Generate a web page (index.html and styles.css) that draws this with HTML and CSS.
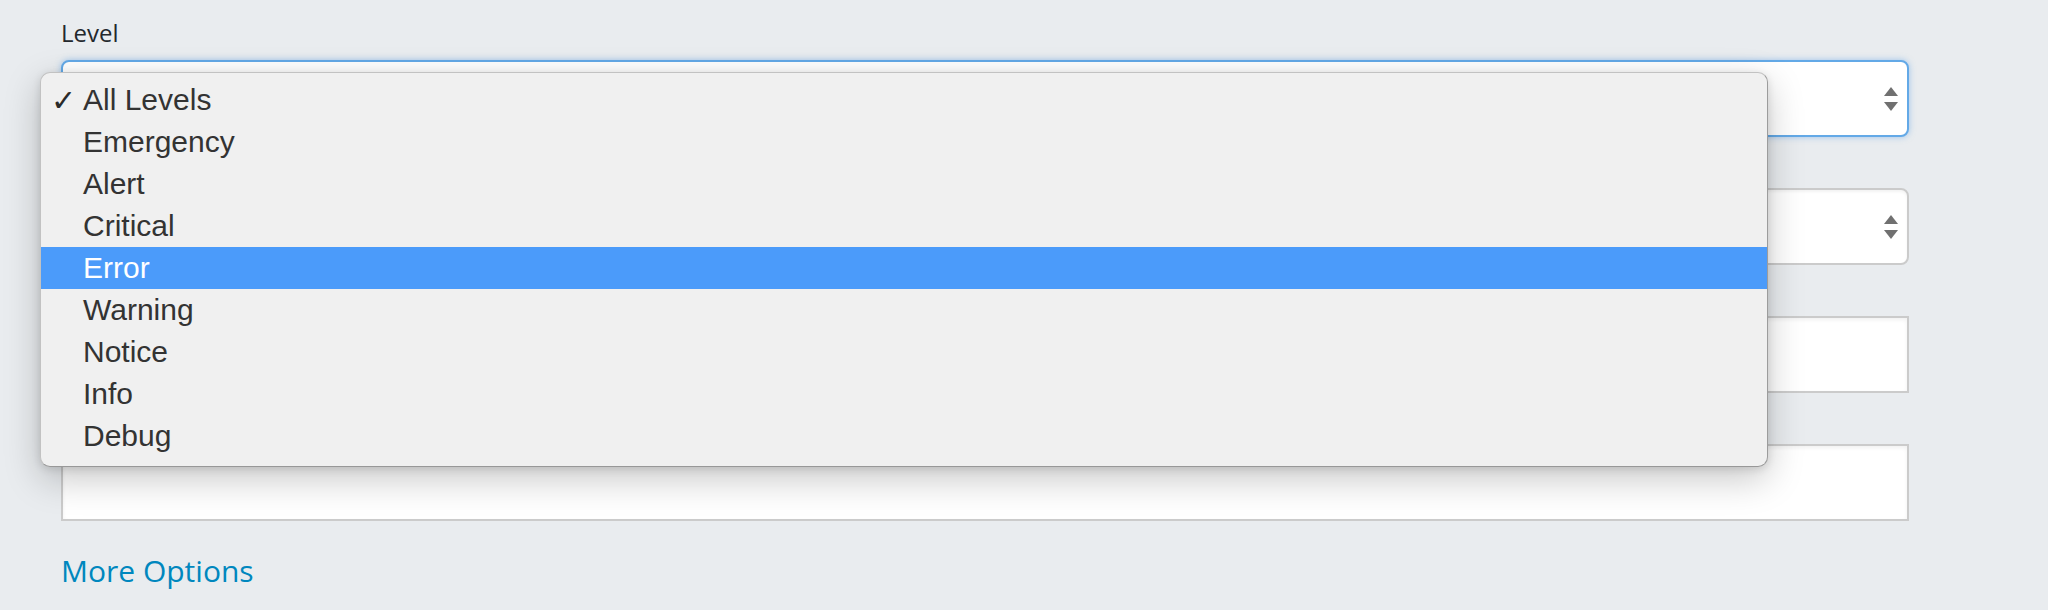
FILE: index.html
```html
<!DOCTYPE html>
<html>
    <head>
        <meta charset="utf-8">
        <title>Log filters</title>
        <link rel="stylesheet" href="styles.css">
    </head>
    <body>
        <div class="page">
            <form class="filters">
                <div class="field">
                    <label class="label">Level</label>
                    <div class="select focused">
                        <svg class="arrows" width="14" height="24" viewBox="0 0 14 24">
                            <polygon points="7,0 14,9 0,9" fill="#707070"/>
                            <polygon points="0,15 14,15 7,24" fill="#707070"/>
                        </svg>
                    </div>
                </div>
                <div class="field">
                    <label class="label covered">Channel</label>
                    <div class="select">
                        <svg class="arrows" width="14" height="24" viewBox="0 0 14 24">
                            <polygon points="7,0 14,9 0,9" fill="#707070"/>
                            <polygon points="0,15 14,15 7,24" fill="#707070"/>
                        </svg>
                    </div>
                </div>
                <div class="field">
                    <label class="label covered">Message</label>
                    <div class="input"></div>
                </div>
                <div class="field">
                    <label class="label covered">Context</label>
                    <div class="input"></div>
                </div>
                <a class="more" href="#">More Options</a>
            </form>

            <!-- native select popup, open over the form -->
            <ul class="menu">
                <li class="item"><span class="check">&#10003;</span>All Levels</li>
                <li class="item"><span class="check"></span>Emergency</li>
                <li class="item"><span class="check"></span>Alert</li>
                <li class="item"><span class="check"></span>Critical</li>
                <li class="item active"><span class="check"></span>Error</li>
                <li class="item"><span class="check"></span>Warning</li>
                <li class="item"><span class="check"></span>Notice</li>
                <li class="item"><span class="check"></span>Info</li>
                <li class="item"><span class="check"></span>Debug</li>
            </ul>
        </div>
    </body>
</html>
```

FILE: styles.css
```css
html, body {
    margin: 0;
    background: #e9ecef;
}
.page {
    position: relative;
    height: 610px;
    overflow: hidden;
}
.filters {
    display: flex;
    flex-direction: column;
    padding: 16px 139px 0 61px;
    font-family: "Open Sans", sans-serif;
}
.field {
    display: flex;
    flex-direction: column;
    margin-bottom: 7px;
}
.label {
    font-size: 24px;
    line-height: 34px;
    color: #23282d;
    margin-bottom: 10px;
}
/* hidden under the open menu anyway */
.label.covered {
    visibility: hidden;
}
.select {
    display: flex;
    align-items: center;
    justify-content: flex-end;
    box-sizing: border-box;
    height: 77px;
    padding-right: 9px;
    background: #fff;
    border: 2px solid #cbcbcb;
    border-radius: 8px;
    box-shadow: inset 0 2px 3px rgba(0, 0, 0, 0.05);
}
.select.focused {
    border-color: #63a9e7;
    box-shadow: 0 0 6px rgba(92, 160, 230, 0.55);
}
.input {
    box-sizing: border-box;
    height: 77px;
    background: #fff;
    border: 2px solid #cbcbcb;
    box-shadow: inset 0 2px 4px rgba(0, 0, 0, 0.06);
}
.more {
    margin-top: 22px;
    font-size: 30px;
    line-height: 42px;
    color: #0087be;
    text-decoration: none;
}

.menu {
    position: absolute;
    left: 40px;
    top: 72px;
    width: 1728px;
    box-sizing: border-box;
    margin: 0;
    padding: 6px 0 9px;
    list-style: none;
    background: #f0f0f0;
    border: 1px solid #c2c2c2;
    border-right-color: #9c9c9c;
    border-bottom-color: #989898;
    border-radius: 10px;
    box-shadow: 0 12px 36px rgba(0, 0, 0, 0.22), 0 2px 8px rgba(0, 0, 0, 0.12);
    font-family: "Liberation Sans", Arial, sans-serif;
}
.item {
    display: flex;
    align-items: center;
    height: 42px;
    padding-left: 10px;
    font-size: 30px;
    color: #333;
}
.item.active {
    background: #4b9bfa;
    color: #fff;
}
.check {
    width: 32px;
    font-family: "DejaVu Sans", sans-serif;
    font-size: 30px;
    font-weight: bold;
    color: #2a2a2a;
}
```
